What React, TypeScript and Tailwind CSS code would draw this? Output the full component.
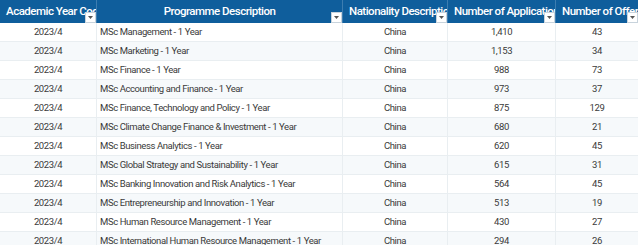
import React from "react";

const rows: [string, string, string, string, string][] = [
  ["2023/4", "MSc Management - 1 Year", "China", "1,410", "43"],
  ["2023/4", "MSc Marketing - 1 Year", "China", "1,153", "34"],
  ["2023/4", "MSc Finance - 1 Year", "China", "988", "73"],
  ["2023/4", "MSc Accounting and Finance - 1 Year", "China", "973", "37"],
  ["2023/4", "MSc Finance, Technology and Policy - 1 Year", "China", "875", "129"],
  ["2023/4", "MSc Climate Change Finance & Investment - 1 Year", "China", "680", "21"],
  ["2023/4", "MSc Business Analytics - 1 Year", "China", "620", "45"],
  ["2023/4", "MSc Global Strategy and Sustainability - 1 Year", "China", "615", "31"],
  ["2023/4", "MSc Banking Innovation and Risk Analytics - 1 Year", "China", "564", "45"],
  ["2023/4", "MSc Entrepreneurship and Innovation - 1 Year", "China", "513", "19"],
  ["2023/4", "MSc Human Resource Management - 1 Year", "China", "430", "27"],
  ["2023/4", "MSc International Human Resource Management - 1 Year", "China", "294", "26"],
];

const headers = [
  "Academic Year Code",
  "Programme Description",
  "Nationality Description",
  "Number of Applications",
  "Number of Offers",
];

function Drop() {
  return (
    <div className="absolute right-0 bottom-0 w-[11px] h-[11px] bg-white border border-[#c8d3dc] flex items-center justify-center">
      <svg width="5" height="3" viewBox="0 0 5 3">
        <path d="M0 0 L5 0 L2.5 3 Z" fill="#555" />
      </svg>
    </div>
  );
}

export default function App() {
  const cols = "grid grid-cols-[96px_246px_105px_108px_83px]";
  return (
    <div
      className="w-[640px] h-[245px] overflow-hidden bg-white"
      style={{ fontFamily: "Roboto, 'Liberation Sans', sans-serif" }}
    >
      <div className="w-[638px]">
        <div className={`${cols} h-[23px] bg-[#0f5e9c]`}>
          {headers.map((h, i) => (
            <div
              key={i}
              className={`relative h-full overflow-hidden ${i > 0 ? "border-l border-[#3d7db0]" : ""}`}
            >
              <div className="h-full px-[6px] pt-[3px] text-center whitespace-nowrap overflow-hidden text-white text-[11.5px] tracking-[-0.5px] font-medium leading-[16px]">
                {h}
              </div>
              <Drop />
            </div>
          ))}
        </div>
        {rows.map((r, ri) => (
          <div
            key={ri}
            className={`${cols} h-[19px] border-b border-[#e9eef1] ${ri % 2 === 1 ? "bg-[#f6f9fb]" : "bg-white"}`}
          >
            {r.map((c, ci) => (
              <div
                key={ci}
                className={`h-full flex items-center whitespace-nowrap overflow-hidden text-[9.5px] tracking-[-0.4px] text-[#3a3a3a] ${
                  ci > 0 ? "border-l border-[#e9eef1]" : ""
                } ${ci === 1 ? "justify-start pl-[3px]" : "justify-center"}`}
              >
                {c}
              </div>
            ))}
          </div>
        ))}
      </div>
    </div>
  );
}
